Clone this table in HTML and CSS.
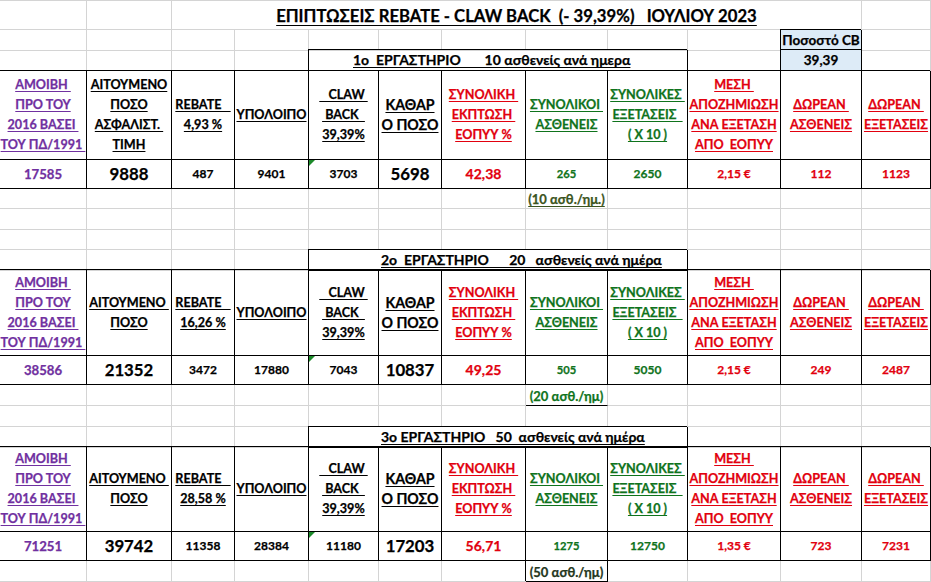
FILE: index.html
```html
<!DOCTYPE html>
<html lang="el">
<head>
<meta charset="utf-8">
<title>ΕΠΙΠΤΩΣΕΙΣ REBATE - CLAW BACK</title>
<link rel="stylesheet" href="styles.css">
</head>
<body>
<div class="sheet">
  <div class="row r29">
    <div class="c"></div><div class="c"></div>
    <div class="c title span-title"><span class="u">ΕΠΙΠΤΩΣΕΙΣ REBATE - CLAW BACK  (- 39,39%)   ΙΟΥΛΙΟΥ 2023</span></div>
    <div class="c"></div>
  </div>
  <div class="row r20">
    <div class="c"></div><div class="c"></div><div class="c"></div><div class="c"></div><div class="c"></div>
    <div class="c"></div><div class="c"></div><div class="c"></div><div class="c"></div><div class="c"></div>
    <div class="c k blue">Ποσοστό CB</div>
    <div class="c"></div>
  </div>
  <div class="row r21">
    <div class="c"></div><div class="c"></div><div class="c"></div><div class="c"></div>
    <div class="c k lab lab1 span-lab"><span class="u">1ο  ΕΡΓΑΣΤΗΡΙΟ       10 ασθενείς ανά ημερα</span></div>
    <div class="c"></div>
    <div class="c k blue">39,39</div>
    <div class="c"></div>
  </div>

  <!-- block 1 header -->
  <div class="row r89">
    <div class="c k hd pu"><span class="u">ΑΜΟΙΒΗ&nbsp;<br>ΠΡΟ ΤΟΥ<br>2016 ΒΑΣΕΙ&nbsp;<br>ΤΟΥ ΠΔ/1991&nbsp;</span></div>
    <div class="c k hd"><span class="u">ΑΙΤΟΥΜΕΝΟ<br>ΠΟΣΟ<br>ΑΣΦΑΛΙΣΤ.&nbsp;<br>ΤΙΜΗ</span></div>
    <div class="c k hd"><span class="u">REBATE&nbsp;&nbsp;&nbsp;<br>4,93 %</span></div>
    <div class="c k hd"><span class="u">ΥΠΟΛΟΙΠΟ</span></div>
    <div class="c k hd"><span class="u">&nbsp;&nbsp;&nbsp;CLAW&nbsp;<br>&nbsp;BACK&nbsp;&nbsp;<br>39,39%</span></div>
    <div class="c k big"><span class="u">ΚΑΘΑΡ<br>Ο ΠΟΣΟ</span></div>
    <div class="c k hd rd"><span class="u">ΣΥΝΟΛΙΚΗ&nbsp;<br>ΕΚΠΤΩΣΗ&nbsp;<br>ΕΟΠΥΥ %</span></div>
    <div class="c k hd gr"><span class="u">ΣΥΝΟΛΙΚΟΙ&nbsp;<br>ΑΣΘΕΝΕΙΣ</span></div>
    <div class="c k hd gr"><span class="u">ΣΥΝΟΛΙΚΕΣ&nbsp;<br>ΕΞΕΤΑΣΕΙΣ&nbsp;&nbsp;<br>( Χ 10 )</span></div>
    <div class="c k hd rd"><span class="u">ΜΕΣΗ&nbsp;<br>ΑΠΟΖΗΜΙΩΣΗ<br>ΑΝΑ ΕΞΕΤΑΣΗ<br>ΑΠΟ&nbsp; ΕΟΠΥΥ</span></div>
    <div class="c k hd rd"><span class="u">ΔΩΡΕΑΝ&nbsp;<br>ΑΣΘΕΝΕΙΣ</span></div>
    <div class="c k hd rd"><span class="u">ΔΩΡΕΑΝ&nbsp;<br>ΕΞΕΤΑΣΕΙΣ</span></div>
  </div>
  <div class="row r29">
    <div class="c k pu dv">17585</div>
    <div class="c k dbig">9888</div>
    <div class="c k ds">487</div>
    <div class="c k ds">9401</div>
    <div class="c k ds tri">3703</div>
    <div class="c k dbig">5698</div>
    <div class="c k rd dmid">42,38</div>
    <div class="c k gr dxs">265</div>
    <div class="c k gr ds">2650</div>
    <div class="c k rd ds">2,15 €</div>
    <div class="c k rd ds">112</div>
    <div class="c k rd ds">1123</div>
  </div>
  <div class="row r20">
    <div class="c"></div><div class="c"></div><div class="c"></div><div class="c"></div><div class="c"></div><div class="c"></div><div class="c"></div>
    <div class="c note note1"><span class="u">(10 ασθ./ημ.)</span></div>
    <div class="c"></div><div class="c"></div><div class="c"></div><div class="c"></div>
  </div>
  <div class="row r21">
    <div class="c"></div><div class="c"></div><div class="c"></div><div class="c"></div><div class="c"></div><div class="c"></div>
    <div class="c"></div><div class="c"></div><div class="c"></div><div class="c"></div><div class="c"></div><div class="c"></div>
  </div>
  <div class="row r20">
    <div class="c"></div><div class="c"></div><div class="c"></div><div class="c"></div><div class="c"></div><div class="c"></div>
    <div class="c"></div><div class="c"></div><div class="c"></div><div class="c"></div><div class="c"></div><div class="c"></div>
  </div>
  <div class="row r20">
    <div class="c"></div><div class="c"></div><div class="c"></div><div class="c"></div>
    <div class="c k lab lab2 span-lab"><span class="u">2ο  ΕΡΓΑΣΤΗΡΙΟ      20   ασθενείς ανά ημέρα</span></div>
    <div class="c"></div><div class="c"></div><div class="c"></div>
  </div>

  <!-- block 2 header -->
  <div class="row r86">
    <div class="c k hd pu"><span class="u">ΑΜΟΙΒΗ&nbsp;<br>ΠΡΟ ΤΟΥ<br>2016 ΒΑΣΕΙ&nbsp;<br>ΤΟΥ ΠΔ/1991&nbsp;</span></div>
    <div class="c k hd"><span class="u">ΑΙΤΟΥΜΕΝΟ&nbsp;<br>ΠΟΣΟ</span></div>
    <div class="c k hd"><span class="u">REBATE&nbsp;&nbsp;&nbsp;<br>16,26 %</span></div>
    <div class="c k hd"><span class="u">ΥΠΟΛΟΙΠΟ</span></div>
    <div class="c k hd"><span class="u">&nbsp;&nbsp;&nbsp;CLAW&nbsp;<br>&nbsp;BACK&nbsp;&nbsp;<br>39,39%</span></div>
    <div class="c k big"><span class="u">ΚΑΘΑΡ<br>Ο ΠΟΣΟ</span></div>
    <div class="c k hd rd"><span class="u">ΣΥΝΟΛΙΚΗ&nbsp;<br>ΕΚΠΤΩΣΗ&nbsp;<br>ΕΟΠΥΥ %</span></div>
    <div class="c k hd gr"><span class="u">ΣΥΝΟΛΙΚΟΙ&nbsp;<br>ΑΣΘΕΝΕΙΣ</span></div>
    <div class="c k hd gr"><span class="u">ΣΥΝΟΛΙΚΕΣ&nbsp;<br>ΕΞΕΤΑΣΕΙΣ&nbsp;&nbsp;<br>( Χ 10 )</span></div>
    <div class="c k hd rd"><span class="u">ΜΕΣΗ&nbsp;<br>ΑΠΟΖΗΜΙΩΣΗ<br>ΑΝΑ ΕΞΕΤΑΣΗ<br>ΑΠΟ&nbsp; ΕΟΠΥΥ</span></div>
    <div class="c k hd rd"><span class="u">ΔΩΡΕΑΝ&nbsp;<br>ΑΣΘΕΝΕΙΣ</span></div>
    <div class="c k hd rd"><span class="u">ΔΩΡΕΑΝ&nbsp;<br>ΕΞΕΤΑΣΕΙΣ</span></div>
  </div>
  <div class="row r29">
    <div class="c k pu dv">38586</div>
    <div class="c k dbig">21352</div>
    <div class="c k ds">3472</div>
    <div class="c k ds">17880</div>
    <div class="c k ds tri">7043</div>
    <div class="c k dbig">10837</div>
    <div class="c k rd dmid">49,25</div>
    <div class="c k gr dxs">505</div>
    <div class="c k gr ds">5050</div>
    <div class="c k rd ds">2,15 €</div>
    <div class="c k rd ds">249</div>
    <div class="c k rd ds">2487</div>
  </div>
  <div class="row r21">
    <div class="c"></div><div class="c"></div><div class="c"></div><div class="c"></div><div class="c"></div><div class="c"></div><div class="c"></div>
    <div class="c kb note note2">(20 ασθ./ημ)</div>
    <div class="c"></div><div class="c"></div><div class="c"></div><div class="c"></div>
  </div>
  <div class="row r21">
    <div class="c"></div><div class="c"></div><div class="c"></div><div class="c"></div><div class="c"></div><div class="c"></div>
    <div class="c"></div><div class="c"></div><div class="c"></div><div class="c"></div><div class="c"></div><div class="c"></div>
  </div>
  <div class="row r20">
    <div class="c"></div><div class="c"></div><div class="c"></div><div class="c"></div>
    <div class="c k lab lab3 span-lab"><span class="u">3ο ΕΡΓΑΣΤΗΡΙΟ   50  ασθενείς ανά ημέρα</span></div>
    <div class="c"></div><div class="c"></div><div class="c"></div>
  </div>

  <!-- block 3 header -->
  <div class="row r85">
    <div class="c k hd pu"><span class="u">ΑΜΟΙΒΗ&nbsp;<br>ΠΡΟ ΤΟΥ<br>2016 ΒΑΣΕΙ&nbsp;<br>ΤΟΥ ΠΔ/1991&nbsp;</span></div>
    <div class="c k hd"><span class="u">ΑΙΤΟΥΜΕΝΟ&nbsp;<br>ΠΟΣΟ</span></div>
    <div class="c k hd"><span class="u">REBATE&nbsp;&nbsp;&nbsp;<br>28,58 %</span></div>
    <div class="c k hd"><span class="u">ΥΠΟΛΟΙΠΟ</span></div>
    <div class="c k hd"><span class="u">&nbsp;&nbsp;&nbsp;CLAW&nbsp;<br>&nbsp;BACK&nbsp;&nbsp;<br>39,39%</span></div>
    <div class="c k big"><span class="u">ΚΑΘΑΡ<br>Ο ΠΟΣΟ</span></div>
    <div class="c k hd rd"><span class="u">ΣΥΝΟΛΙΚΗ&nbsp;<br>ΕΚΠΤΩΣΗ&nbsp;<br>ΕΟΠΥΥ %</span></div>
    <div class="c k hd gr"><span class="u">ΣΥΝΟΛΙΚΟΙ&nbsp;<br>ΑΣΘΕΝΕΙΣ</span></div>
    <div class="c k hd gr"><span class="u">ΣΥΝΟΛΙΚΕΣ&nbsp;<br>ΕΞΕΤΑΣΕΙΣ&nbsp;&nbsp;<br>( Χ 10 )</span></div>
    <div class="c k hd rd"><span class="u">ΜΕΣΗ&nbsp;<br>ΑΠΟΖΗΜΙΩΣΗ<br>ΑΝΑ ΕΞΕΤΑΣΗ<br>ΑΠΟ&nbsp; ΕΟΠΥΥ</span></div>
    <div class="c k hd rd"><span class="u">ΔΩΡΕΑΝ&nbsp;<br>ΑΣΘΕΝΕΙΣ</span></div>
    <div class="c k hd rd"><span class="u">ΔΩΡΕΑΝ&nbsp;<br>ΕΞΕΤΑΣΕΙΣ</span></div>
  </div>
  <div class="row r29">
    <div class="c k pu dv">71251</div>
    <div class="c k dbig">39742</div>
    <div class="c k ds">11358</div>
    <div class="c k ds">28384</div>
    <div class="c k ds tri">11180</div>
    <div class="c k dbig">17203</div>
    <div class="c k rd dmid">56,71</div>
    <div class="c k gr dxs">1275</div>
    <div class="c k gr ds">12750</div>
    <div class="c k rd ds">1,35 €</div>
    <div class="c k rd ds">723</div>
    <div class="c k rd ds">7231</div>
  </div>
  <div class="row r21">
    <div class="c"></div><div class="c"></div><div class="c"></div><div class="c"></div><div class="c"></div><div class="c"></div><div class="c"></div>
    <div class="c k note note3">(50 ασθ./ημ)</div>
    <div class="c"></div><div class="c"></div><div class="c"></div><div class="c"></div>
  </div>
</div>
</body>
</html>
```

FILE: styles.css
```css
* { box-sizing: border-box; }
html, body { margin: 0; padding: 0; background: #fff; }
body {
  width: 931px;
  height: 582px;
  overflow: hidden;
  font-family: Lato, "Open Sans", "DejaVu Sans", sans-serif;
  font-weight: 700;
  color: #000;
  -webkit-text-stroke: 0.25px currentColor;
}
.sheet { border-top: 1px solid #d4d4d4; }
.row {
  display: grid;
  grid-template-columns: 87px 85px 63px 74px 70px 63px 84px 82px 80px 93px 81px 69px;
}
.r20 { height: 20px; }
.r21 { height: 21px; }
.r29 { height: 29px; }
.r85 { height: 85px; }
.r86 { height: 86px; }
.r89 { height: 89px; }

.c {
  position: relative;
  border-right: 1px solid #d4d4d4;
  border-bottom: 1px solid #d4d4d4;
  display: flex;
  align-items: center;
  justify-content: center;
  text-align: center;
  white-space: nowrap;
  line-height: 20px;
  font-size: 13px;
  min-width: 0;
}
.k {
  border-right-color: #000;
  border-bottom-color: #000;
  box-shadow: -1px -1px 0 #000;
}
.kb { border-bottom-color: #000; }
.u { text-decoration: underline; text-underline-offset: 2px; text-decoration-thickness: 1px; white-space: nowrap; }

.span-title { grid-column: 3 / 12; }
.span-lab { grid-column: 5 / 10; }

.title {
  font-size: 16.7px;
  align-items: flex-end;
  padding-bottom: 3px;
  white-space: pre;
}
.title .u { white-space: pre; text-underline-offset: 3px; }

.blue { background: #ddebf7; font-size: 13.5px; }

.lab {
  justify-content: flex-start;
  align-items: flex-end;
  font-size: 14px;
}
.lab .u { white-space: pre; }
.lab1 { padding-left: 44px; }
.lab2 { padding-left: 72px; }
.lab3 { padding-left: 72px; }

.hd { font-size: 12.6px; }
.pu { color: #7030a0; }
.rd { color: #e2000e; }
.gr { color: #0f731c; }
.big { font-size: 14.2px; }

.dv { font-size: 13.2px; }
.dbig { font-size: 16.8px; }
.dmid { font-size: 14px; }
.ds { font-size: 12px; }
.dxs { font-size: 11.2px; }

.tri::before {
  content: "";
  position: absolute;
  top: 0;
  left: 0;
  border-top: 6px solid #1c8a2a;
  border-right: 6px solid transparent;
}

.note {
  overflow: visible;
  font-size: 13px;
  align-items: flex-end;
  line-height: 18px;
}
.note1 { color: #3b5420; }
.note2 { color: #0f731c; }
.note3 { color: #24361c; }
```
